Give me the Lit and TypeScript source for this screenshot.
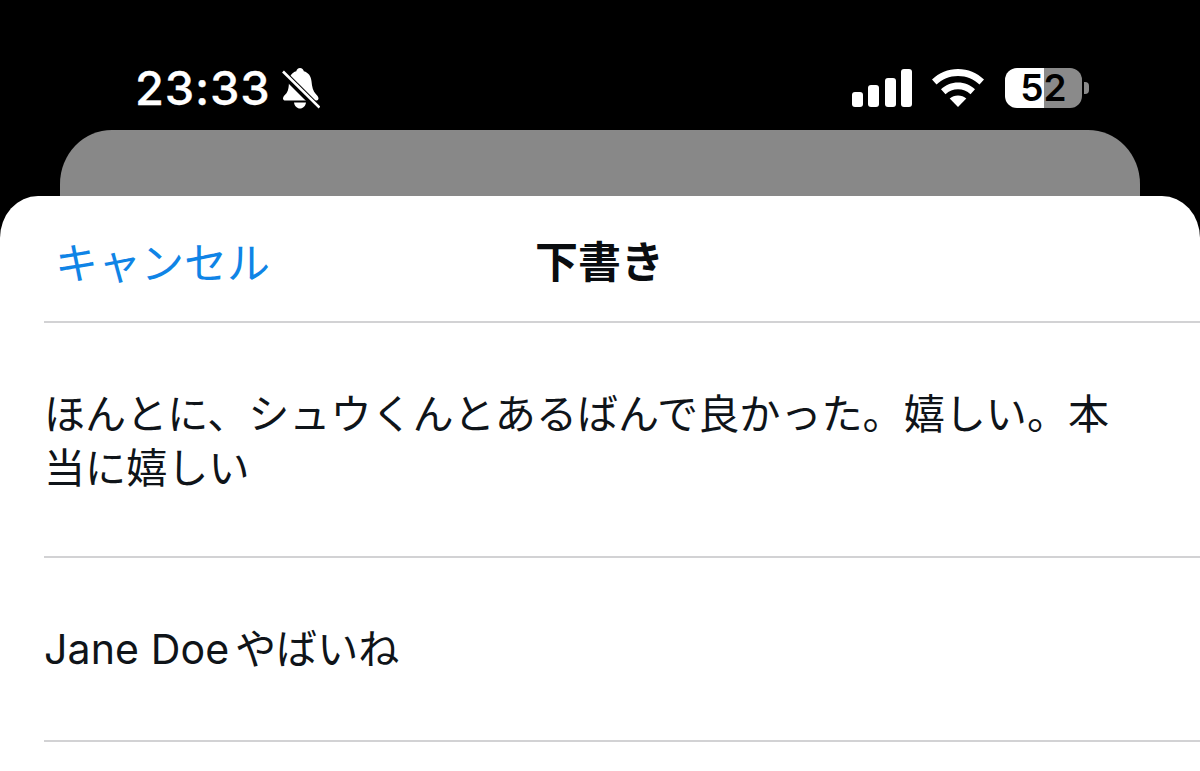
import { LitElement, html, css } from "lit";
import { customElement } from "lit/decorators.js";

@customElement("app-root")
export class AppRoot extends LitElement {
  static styles = css`
    :host {
      display: block;
      width: 1200px;
      height: 771px;
      overflow: hidden;
      background: #000;
      font-family: Inter, "Noto Sans CJK JP", sans-serif;
    }
    .status {
      height: 130px;
      box-sizing: border-box;
      padding: 68px 111px 0 135px;
      display: flex;
      align-items: flex-start;
      justify-content: space-between;
      color: #fff;
    }
    .left {
      display: flex;
      align-items: center;
      gap: 11px;
      height: 40px;
    }
    .time {
      font-size: 47px;
      font-weight: 500;
      line-height: 40px;
      letter-spacing: 0.8px;
      -webkit-text-stroke: 0.3px #fff;
    }
    .right {
      display: flex;
      align-items: center;
      height: 40px;
    }
    .signal { margin-right: 20px; display: block; }
    .wifi { margin-right: 21px; display: block; }
    .battery {
      width: 77px;
      height: 40px;
      border-radius: 12px;
      background: linear-gradient(90deg, #fff 0 39px, #8a8a8a 39px);
      color: #000;
      font-size: 37px;
      font-weight: 600;
      line-height: 40px;
      text-align: center;
    }
    .nub {
      width: 5px;
      height: 12px;
      margin-left: 2px;
      border-radius: 0 4px 4px 0;
      background: #8a8a8a;
    }
    .back {
      height: 66px;
      margin: 0 60px;
      background: #888;
      border-radius: 52px 52px 0 0 / 54px 54px 0 0;
    }
    .sheet {
      background: #fff;
      height: 575px;
      border-radius: 38px 38px 0 0 / 42px 42px 0 0;
      padding-left: 44px;
    }
    .head {
      height: 127px;
      box-sizing: border-box;
      padding-right: 45px;
      border-bottom: 2px solid #d2d2d4;
      display: grid;
      grid-template-columns: 1fr auto 1fr;
      align-items: center;
    }
    .cancel {
      color: #0f84e6;
      font-size: 43px;
      padding: 2px 0 0 11px;
    }
    .title {
      color: #0a0d10;
      font-size: 43px;
      font-weight: 700;
    }
    .row {
      box-sizing: border-box;
      border-bottom: 2px solid #d2d2d4;
      display: flex;
      align-items: center;
      color: #0f1419;
      font-size: 41.1px;
      line-height: 54px;
    }
    .row p {
      margin: 0;
      width: 1075px;
    }
    .r1 { height: 235px; padding-top: 2px; }
    .r2 { height: 184px; }
    .latin { letter-spacing: 0.1px; }
    .ja { word-spacing: -6px; }
  `;

  render() {
    return html`
      <div class="status">
        <div class="left">
          <span class="time">23:33</span>
          <svg width="38" height="41" viewBox="0 0 38 41">
            <path fill="#fff" d="M18 0c2 0 3.500 1.500 3.800 3.300 4.700 1.300 7.200 5 7.700 10 .5 5.500 1.500 10 4.500 13 1.300 1.300 2.500 2.800 2.500 4.200 0 1.300-1 2.100-2.600 2.100H3.600c-1.700 0-2.600-.8-2.600-2.100 0-1.400 1.200-2.900 2.500-4.200C6.500 23.400 6.800 19 7 13.500c.2-5 2.700-8.900 7.300-10.200C14.600 1.500 16 0 18 0z"/>
            <path fill="#fff" d="M12 34.500h12c-.5 3.500-3 6-6 6s-5.500-2.500-6-6z"/>
            <path stroke="#000" stroke-width="7" d="M-2 2 38 42"/>
            <path stroke="#fff" stroke-width="2.600" d="M1 3.500 37.500 39.500"/>
          </svg>
        </div>
        <div class="right">
          <svg class="signal" width="60" height="38" viewBox="0 0 60 38" fill="#fff">
            <rect x="0" y="23" width="11" height="15" rx="3"/>
            <rect x="16" y="16" width="11" height="22" rx="3"/>
            <rect x="33" y="9" width="11" height="29" rx="3"/>
            <rect x="49" y="0" width="11" height="38" rx="3"/>
          </svg>
          <svg class="wifi" width="52" height="38" viewBox="0 0 52 38" fill="#fff">
            <path d="M26 0C36 0 45 4 52 10.500L47.500 15.500C42 10.300 34.500 7 26 7S10 10.300 4.500 15.500L0 10.500C7 4 16 0 26 0z"/>
            <path d="M26 13.500c6.500 0 12.500 2.500 17 6.800L38.500 25.300C35 22 30.700 20.300 26 20.300S17 22 13.500 25.300L9 20.300C13.500 16 19.500 13.500 26 13.500z"/>
            <path d="M26 26.500c3.200 0 6 1.100 8.300 3L26 38 17.700 29.500c2.300-1.900 5.100-3 8.300-3z"/>
          </svg>
          <div class="battery">52</div>
          <div class="nub"></div>
        </div>
      </div>
      <div class="back"></div>
      <div class="sheet">
        <div class="head">
          <span class="cancel">キャンセル</span>
          <span class="title">下書き</span>
          <span></span>
        </div>
        <div class="row r1"><p>ほんとに、シュウくんとあるばんで良かった。嬉しい。本当に嬉しい</p></div>
        <div class="row r2"><p><span class="latin">Jane Doe</span><span class="ja"> やばいね</span></p></div>
      </div>
    `;
  }
}
